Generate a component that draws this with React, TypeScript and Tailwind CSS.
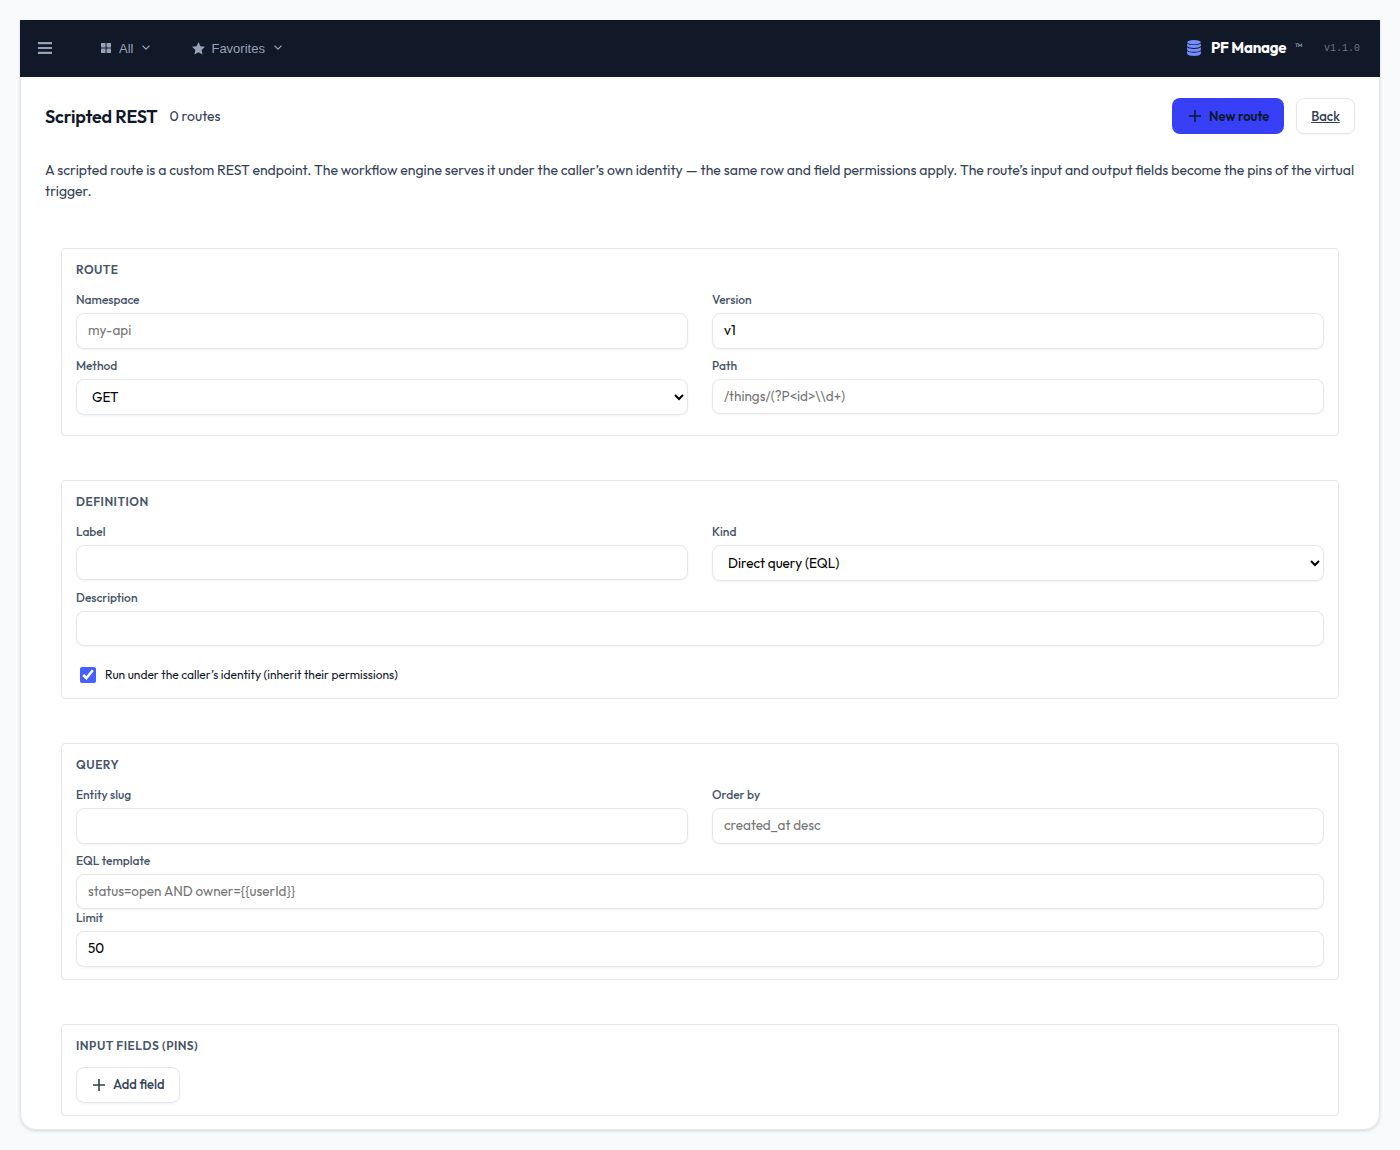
import { useState } from 'react';
import type { ReactNode } from 'react';

const inputClass =
  'block w-full rounded-lg border border-[#e5e7eb] bg-white px-[11px] text-[13.5px] text-black shadow-[0_1px_2px_rgba(15,23,42,0.05)] outline-none placeholder:text-[#757575]';

function Field({ label, className = '', children }: { label: string; className?: string; children: ReactNode }) {
  return (
    <label className={`block ${className}`}>
      <span className="mb-[5px] block h-4 text-[12px] leading-4 font-medium text-[#475569]">{label}</span>
      {children}
    </label>
  );
}

function Section({ title, className, children }: { title: string; className: string; children: ReactNode }) {
  return (
    <section className={`rounded border border-[#e5e7eb] p-[14px] ${className}`}>
      <h2 className="mb-[15px] h-[14px] text-[12px] leading-[14px] font-semibold tracking-[0.48px] text-[#475569] uppercase">
        {title}
      </h2>
      {children}
    </section>
  );
}

const Plus = () => (
  <svg className="h-3 w-3" viewBox="0 0 12 12" fill="none" stroke="currentColor" strokeWidth="1.6">
    <path d="M6 0v12M0 6h12" />
  </svg>
);

const Chevron = () => (
  <svg className="h-[5px] w-2" viewBox="0 0 8 5" fill="none" stroke="currentColor" strokeWidth="1.3">
    <path d="M.5.6L4 4.1 7.5.6" />
  </svg>
);

export default function App() {
  const [version, setVersion] = useState('v1');
  const [limit, setLimit] = useState('50');
  const [inherit, setInherit] = useState(true);

  return (
    <div className="h-[1150px] bg-[#f8fafc] p-5 pb-[19px] font-[Outfit,Lato,sans-serif]">
      <div className="h-[1110px] rounded-b-2xl bg-white shadow-[inset_0_0_0_1px_#e5e7eb,0_1px_3px_rgba(15,23,42,0.16)]">
        {/* Top bar */}
        <header className="flex h-[57px] items-center bg-[#111827] pr-5 pb-px pl-[18px] font-['Liberation_Sans',sans-serif] text-[#94a3b8]">
          <svg className="h-[12px] w-[14px]" viewBox="0 0 14 12" fill="currentColor">
            <path d="M0 0h14v2.2H0zM0 4.9h14v2.2H0zM0 9.8h14V12H0z" />
          </svg>
          <button className="ml-[49px] flex items-center text-[13px]">
            <svg className="h-[10px] w-[10px]" viewBox="0 0 10 10" fill="currentColor">
              <path d="M0 0h4.6v4.6H0zM5.6 0H10v4.6H5.6zM0 5.6h4.6V10H0zM5.6 5.6H10V10H5.6z" />
            </svg>
            <span className="ml-2 pt-px">All</span>
            <span className="mb-[2px] ml-[9px]"><Chevron /></span>
          </button>
          <button className="ml-[42px] flex items-center text-[13px]">
            <svg className="h-[13px] w-[13px]" viewBox="0 0 24 24" fill="currentColor">
              <path d="M12 0l3.6 7.8 8.4 1-6.2 5.8L19.4 23 12 18.8 4.6 23l1.6-8.4L0 8.8l8.4-1z" />
            </svg>
            <span className="ml-[6px] pt-px">Favorites</span>
            <span className="mb-[2px] ml-[9px]"><Chevron /></span>
          </button>
          <div className="ml-auto flex items-center">
            <svg className="h-4 w-[14px]" viewBox="0 0 14 16" fill="#748eff">
              <ellipse cx="7" cy="2.2" rx="6.9" ry="2.2" />
              <path d="M.1 3.5c2.4 2.1 11.4 2.1 13.8 0v2.6c-1.2 2.5-12.6 2.5-13.8 0z" />
              <path d="M.1 7.3c2.4 2.1 11.4 2.1 13.8 0v2.6c-1.2 2.5-12.6 2.5-13.8 0z" />
              <path d="M.1 11.1c2.4 2.1 11.4 2.1 13.8 0v2.6c-1.2 3-12.6 3-13.8 0z" />
            </svg>
            <span className="ml-[10px] w-[77px] font-[Outfit,Lato,sans-serif] text-[15px] font-bold tracking-[-0.2px] whitespace-nowrap text-white">PF Manage</span>
            <span className="mb-[3px] ml-[7px] w-[9px] font-[Outfit,Lato,sans-serif] text-[10px] leading-3 font-semibold">™</span>
            <span className="ml-5 font-['Liberation_Mono',monospace] text-[10px] text-[#64748b]">v1.1.0</span>
          </div>
        </header>

        <main className="px-[25px] pt-[21px]">
          <div className="flex h-9 items-center">
            <h1 className="w-[112.5px] text-[18px] font-semibold tracking-[-0.18px] whitespace-nowrap text-[#0f172a]">Scripted REST</h1>
            <span className="ml-3 text-[14px] text-[#334155]">0 routes</span>
            <button className="ml-auto flex h-9 w-28 items-center rounded-lg bg-[#3740f7] pl-[17px] text-[13px] font-semibold whitespace-nowrap text-[#0f172a]">
              <Plus />
              <span className="ml-2 pt-px">New route</span>
            </button>
            <a className="ml-3 flex h-9 w-[59px] items-center justify-center rounded-lg border border-[#e5e7eb] pt-px text-[13px] font-medium text-[#334155] underline shadow-[0_1px_2px_rgba(15,23,42,0.05)]">
              Back
            </a>
          </div>

          <p className="mt-[26px] text-[14px] leading-[21px] text-[#334155]">
            <span className="block whitespace-nowrap">
              A scripted route is a custom REST endpoint. The workflow engine serves it under the caller’s own identity — the same row and field permissions apply. The route’s input and output fields become the pins of the virtual
            </span>
            <span className="block">trigger.</span>
          </p>

          <form className="mx-4 mt-[46px] space-y-11">
            <Section title="Route" className="h-[188px]">
              <div className="grid grid-cols-2 gap-x-6 gap-y-[9px]">
                <Field label="Namespace">
                  <input className={`${inputClass} h-9 pb-[2px]`} placeholder="my-api" />
                </Field>
                <Field label="Version">
                  <input className={`${inputClass} h-9 pb-[2px]`} value={version} onChange={(e) => setVersion(e.target.value)} />
                </Field>
                <Field label="Method">
                  <select className={`${inputClass} h-9`}>
                    <option>GET</option>
                  </select>
                </Field>
                <Field label="Path">
                  <input className={`${inputClass} h-[35px] pb-px`} placeholder="/things/(?P<id>\\d+)" />
                </Field>
              </div>
            </Section>

            <Section title="Definition" className="h-[219px]">
              <div className="grid grid-cols-2 gap-x-6 gap-y-[9px]">
                <Field label="Label">
                  <input className={`${inputClass} h-[35px]`} />
                </Field>
                <Field label="Kind">
                  <select className={`${inputClass} h-9`}>
                    <option>Direct query (EQL)</option>
                  </select>
                </Field>
                <Field label="Description" className="col-span-2">
                  <input className={`${inputClass} h-[35px]`} />
                </Field>
              </div>
              <label className="mt-[21px] ml-1 flex h-4 items-center text-[12px] text-[#0f172a]">
                <input
                  type="checkbox"
                  className="h-4 w-4 accent-[#4560ff]"
                  checked={inherit}
                  onChange={(e) => setInherit(e.target.checked)}
                />
                <span className="ml-[9px]">Run under the caller’s identity (inherit their permissions)</span>
              </label>
            </Section>

            <Section title="Query" className="h-[237px]">
              <div className="grid grid-cols-2 gap-x-6 gap-y-[9px]">
                <Field label="Entity slug">
                  <input className={`${inputClass} h-9`} />
                </Field>
                <Field label="Order by">
                  <input className={`${inputClass} h-9 pb-[2px]`} placeholder="created_at desc" />
                </Field>
                <Field label="EQL template" className="col-span-2">
                  <input className={`${inputClass} h-[35px] pb-px`} placeholder="status=open AND owner={{userId}}" />
                </Field>
              </div>
              <Field label="Limit" className="mt-[1px]">
                <input className={`${inputClass} h-9 pb-[2px]`} value={limit} onChange={(e) => setLimit(e.target.value)} />
              </Field>
            </Section>

            <Section title="Input fields (pins)" className="h-[92px]">
              <button
                type="button"
                className="-mt-px flex h-9 w-[104px] items-center rounded-lg border border-[#e5e7eb] pl-4 text-[13px] font-medium whitespace-nowrap text-[#334155] shadow-[0_1px_2px_rgba(15,23,42,0.05)]"
              >
                <Plus />
                <span className="ml-2">Add field</span>
              </button>
            </Section>
          </form>
        </main>
      </div>
    </div>
  );
}
